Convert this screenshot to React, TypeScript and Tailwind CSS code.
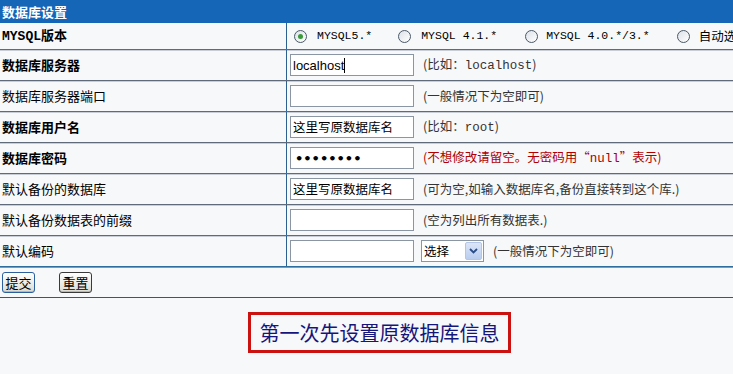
import React from "react";

const CJK = "font-['SimSun','Noto_Sans_CJK_SC','DejaVu_Sans',sans-serif]";
const MONO = "font-['Liberation_Mono','Noto_Sans_CJK_SC',monospace]";

function Box({ children }: { children?: React.ReactNode }) {
  return (
    <div className="w-[124px] h-[22px] shrink-0 border border-[#8a96a4] bg-white pl-[2px] flex items-center text-[12.5px] text-black leading-none">
      {children}
    </div>
  );
}

function Hint({ children, red }: { children: React.ReactNode; red?: boolean }) {
  return (
    <span className={`ml-[9px] whitespace-nowrap text-[12.5px] ${red ? "text-[#b00000]" : "text-[#333]"}`}>
      {children}
    </span>
  );
}

function Row({
  label,
  bold,
  children,
  h = "h-[31px]",
  last,
}: {
  label: React.ReactNode;
  bold?: boolean;
  children: React.ReactNode;
  h?: string;
  last?: boolean;
}) {
  return (
    <div
      className={`flex ${h} border-b ${last ? "border-[#2e6e9e] shadow-[0_1px_0_#6f9fc5]" : "border-[#5f6a7a] shadow-[0_1px_0_#c9ced6]"}`}
    >
      <div className={`w-[286px] shrink-0 pl-[2px] flex items-center text-[13px] text-black ${bold ? "font-bold" : ""}`}>
        {label}
      </div>
      <div className="w-px bg-[#2d5f90] shrink-0" />
      <div className="flex items-center pl-[3px] whitespace-nowrap">{children}</div>
    </div>
  );
}

function Radio({ checked }: { checked?: boolean }) {
  return (
    <span className="inline-flex w-[13px] h-[13px] rounded-full border border-[#4a5868] bg-gradient-to-br from-[#dde2e8] to-white items-center justify-center shrink-0">
      {checked && <span className="w-[5px] h-[5px] rounded-full bg-[#3a9a3a]" />}
    </span>
  );
}

function Btn({ children, active }: { children: React.ReactNode; active?: boolean }) {
  return (
    <div
      className={`h-[21px] w-[33px] flex items-center justify-center rounded-[3px] border ${active ? "border-[#2c5f9e]" : "border-[#3a3a3a]"} bg-gradient-to-b from-white to-[#dcdcd4] text-[13px] text-black leading-none shadow-[inset_0_-1px_0_#b8b8b0]`}
    >
      {children}
    </div>
  );
}

export default function App() {
  return (
    <div className={`w-[733px] h-[374px] overflow-hidden bg-[#f7f8fa] ${CJK}`}>
      <div className="h-[23px] bg-[#1566b7] text-white font-bold text-[13px] pl-[2px] flex items-center">
        数据库设置
      </div>

      <Row
        h="h-[27px]"
        bold
        label={
          <span>
            <span className={`${MONO} font-bold`}>MYSQL</span>版本
          </span>
        }
      >
        <div className={`flex items-center text-[11.5px] text-black ${MONO}`}>
          <span className="ml-[4px] flex"><Radio checked /></span>
          <span className="ml-[10px]">MYSQL5.*</span>
          <span className="ml-[26px] flex"><Radio /></span>
          <span className="ml-[10px]">MYSQL 4.1.*</span>
          <span className="ml-[28px] flex"><Radio /></span>
          <span className="ml-[8px]">MYSQL 4.0.*/3.*</span>
          <span className="ml-[27px] flex"><Radio /></span>
          <span className={`ml-[9px] text-[12.5px] ${CJK}`}>自动选择</span>
        </div>
      </Row>

      <Row bold label="数据库服务器">
        <Box>
          <span className="text-[13px] font-['Liberation_Sans',sans-serif]">localhost</span>
          <span className="w-px h-[15px] bg-black" />
        </Box>
        <Hint>
          (比如：<span className={MONO}>localhost</span>)
        </Hint>
      </Row>

      <Row label="数据库服务器端口">
        <Box />
        <Hint>(一般情况下为空即可)</Hint>
      </Row>

      <Row bold label="数据库用户名">
        <Box>这里写原数据库名</Box>
        <Hint>
          (比如：<span className={MONO}>root</span>)
        </Hint>
      </Row>

      <Row bold label="数据库密码">
        <Box>
          <span className="text-[13px] font-bold pl-[2px] font-['DejaVu_Sans',sans-serif]">••••••••</span>
        </Box>
        <Hint red>
          (不想修改请留空。无密码用“<span className={MONO}>null</span>”表示)
        </Hint>
      </Row>

      <Row label="默认备份的数据库">
        <Box>这里写原数据库名</Box>
        <Hint>(可为空,如输入数据库名,备份直接转到这个库.)</Hint>
      </Row>

      <Row label="默认备份数据表的前缀">
        <Box />
        <Hint>(空为列出所有数据表.)</Hint>
      </Row>

      <Row label="默认编码" last>
        <Box />
        <div className="ml-[7px] w-[63px] h-[22px] border border-[#8a96a4] bg-white flex items-center justify-between">
          <span className="pl-[2px] text-[12.5px] text-black">选择</span>
          <span className="w-[17px] h-[18px] mr-[1px] bg-gradient-to-b from-[#dce6f7] to-[#b9cdef] border border-[#b3c6e6] flex items-center justify-center rounded-[2px]">
            <svg width="9" height="6" viewBox="0 0 9 6">
              <path d="M1 1 L4.5 4.5 L8 1" stroke="#2a4d8a" strokeWidth="1.8" fill="none" />
            </svg>
          </span>
        </div>
        <Hint>(一般情况下为空即可)</Hint>
      </Row>

      <div className="h-[31px] flex items-center pl-[2px] gap-[24px] border-b border-[#4a5260]">
        <Btn active>提交</Btn>
        <Btn>重置</Btn>
      </div>

      <div className="flex pl-[248px] pt-[14px]">
        <div className="w-[263px] h-[41px] border-[3px] border-[#cc1111] flex items-center justify-center">
          <span className="text-[20px] text-[#15157a] leading-none">第一次先设置原数据库信息</span>
        </div>
      </div>
    </div>
  );
}
